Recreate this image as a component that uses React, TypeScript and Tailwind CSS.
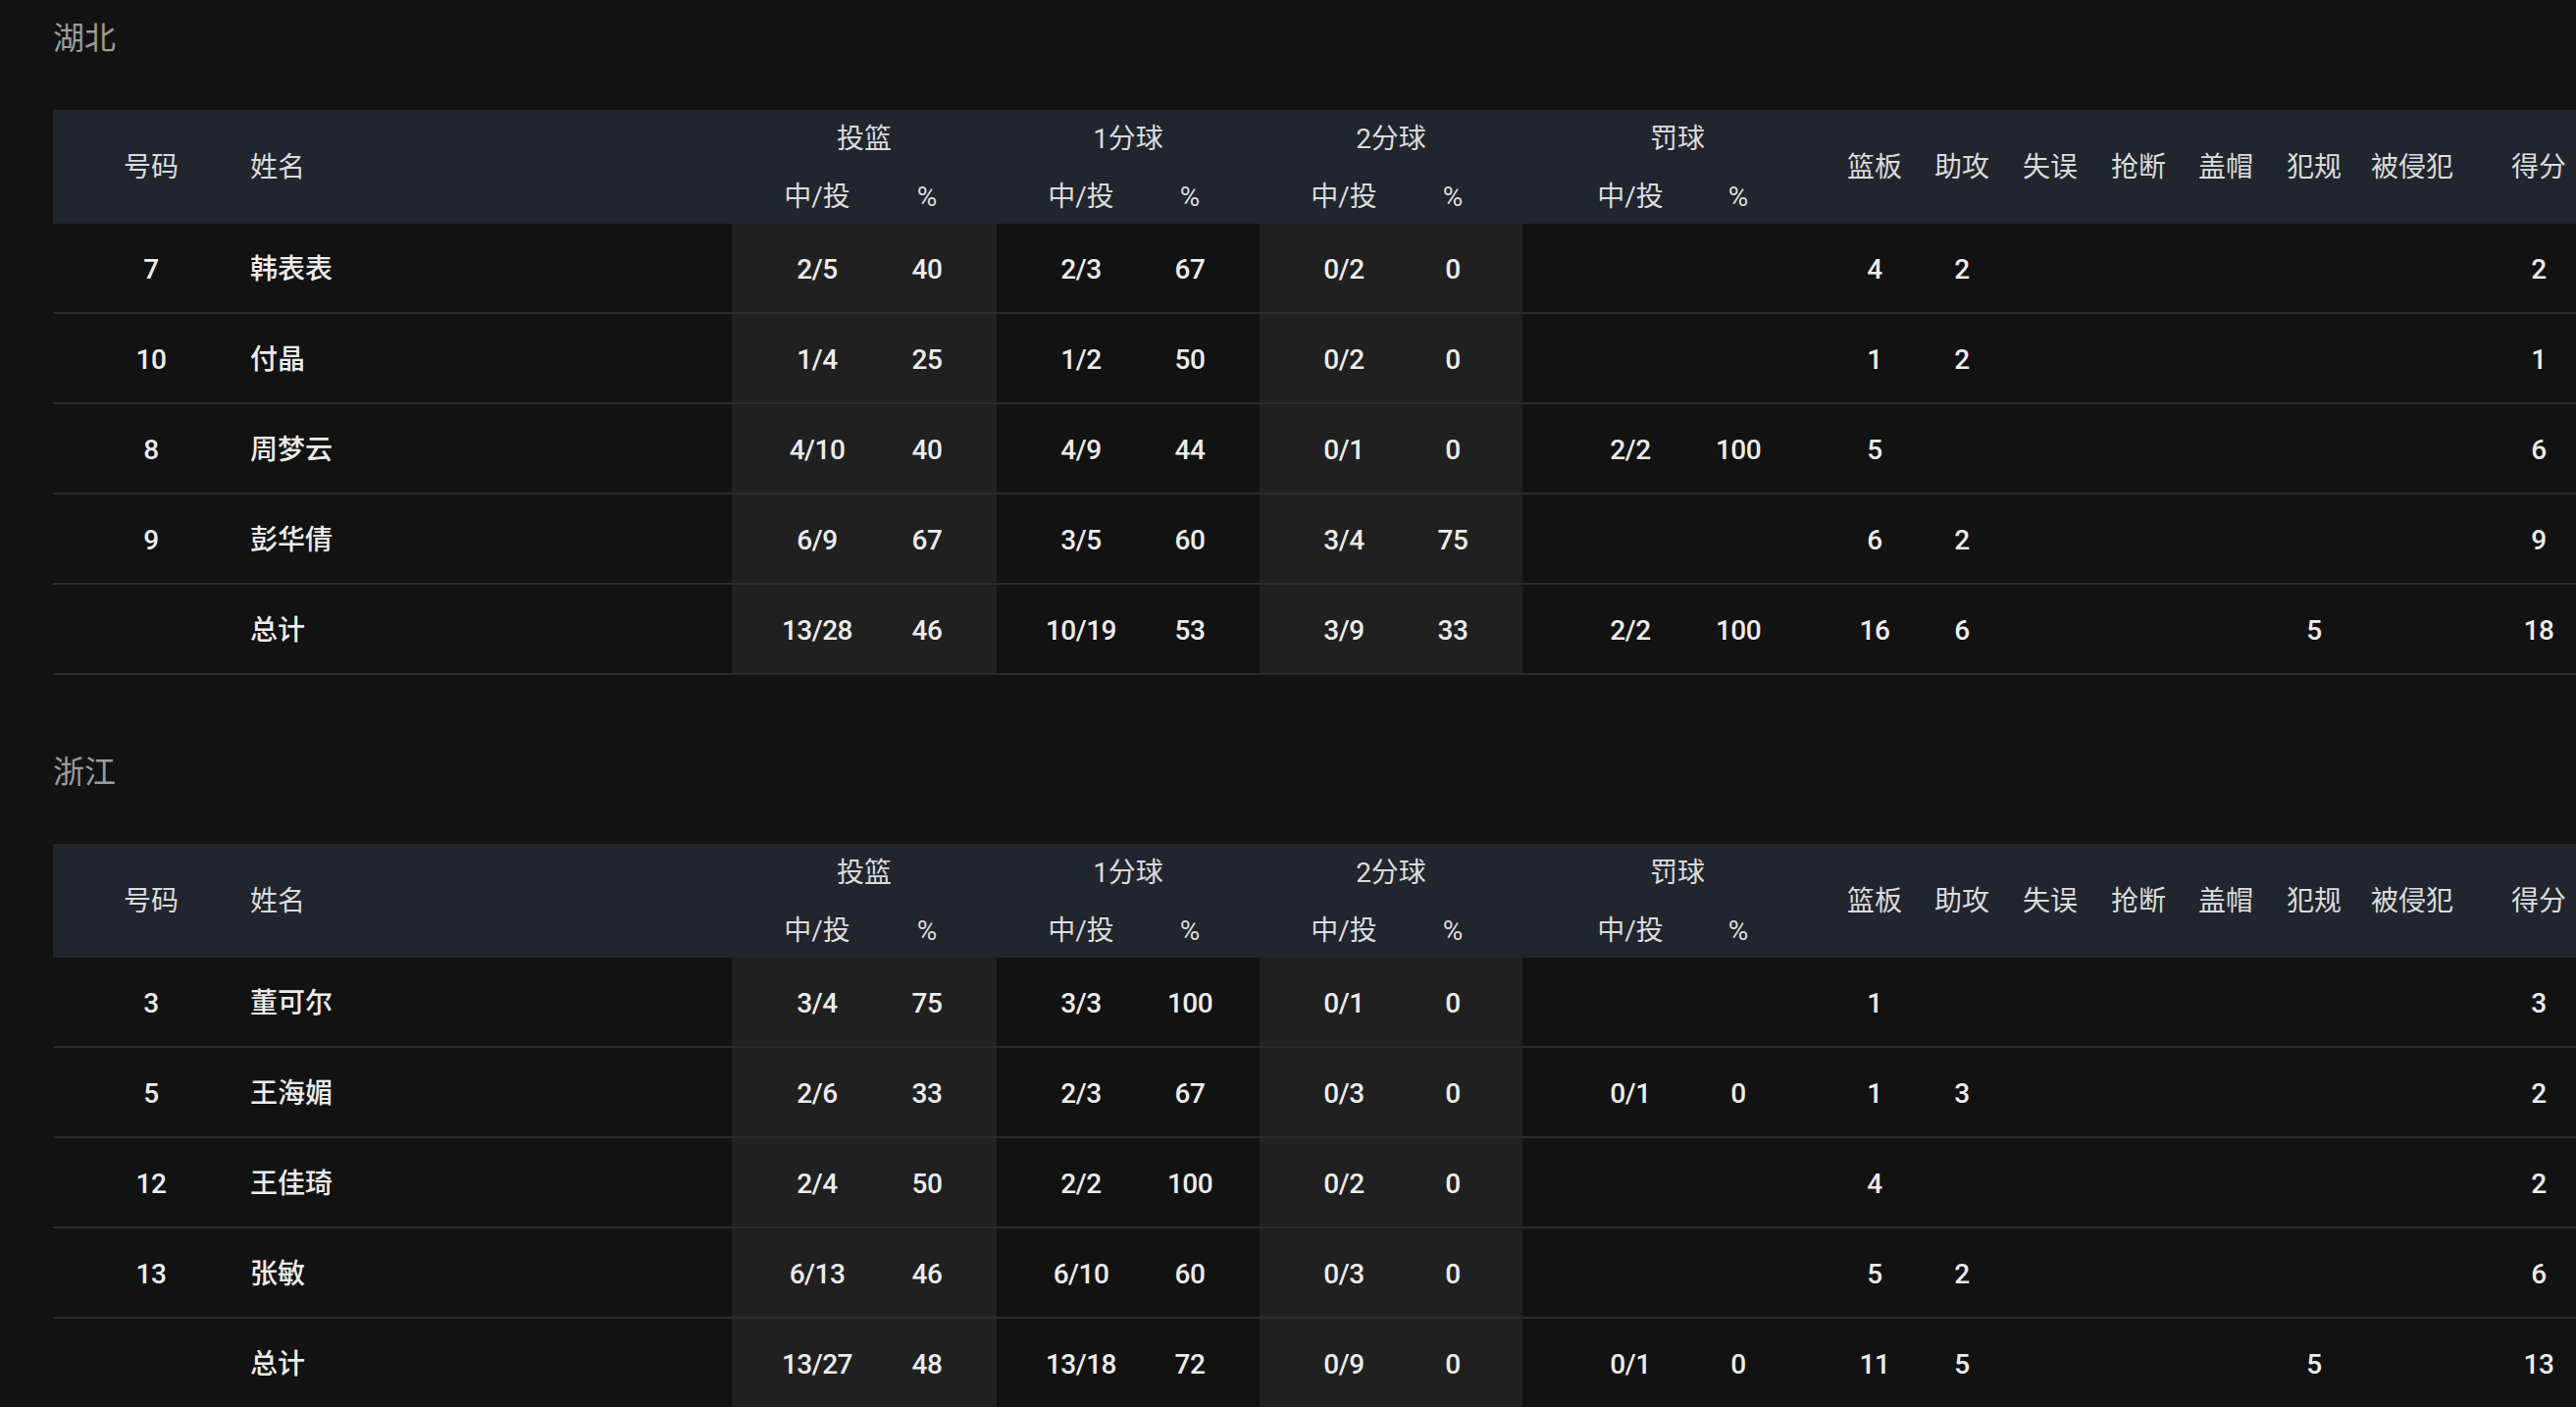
import React from "react";

type Row = {
  no: string;
  name: string;
  fg: [string, string];
  p1: [string, string];
  p2: [string, string];
  ft: [string, string];
  s: string[]; // 篮板 助攻 失误 抢断 盖帽 犯规 被侵犯 得分
};

const hubei: Row[] = [
  { no: "7", name: "韩表表", fg: ["2/5", "40"], p1: ["2/3", "67"], p2: ["0/2", "0"], ft: ["", ""], s: ["4", "2", "", "", "", "", "", "2"] },
  { no: "10", name: "付晶", fg: ["1/4", "25"], p1: ["1/2", "50"], p2: ["0/2", "0"], ft: ["", ""], s: ["1", "2", "", "", "", "", "", "1"] },
  { no: "8", name: "周梦云", fg: ["4/10", "40"], p1: ["4/9", "44"], p2: ["0/1", "0"], ft: ["2/2", "100"], s: ["5", "", "", "", "", "", "", "6"] },
  { no: "9", name: "彭华倩", fg: ["6/9", "67"], p1: ["3/5", "60"], p2: ["3/4", "75"], ft: ["", ""], s: ["6", "2", "", "", "", "", "", "9"] },
  { no: "", name: "总计", fg: ["13/28", "46"], p1: ["10/19", "53"], p2: ["3/9", "33"], ft: ["2/2", "100"], s: ["16", "6", "", "", "", "5", "", "18"] },
];

const zhejiang: Row[] = [
  { no: "3", name: "董可尔", fg: ["3/4", "75"], p1: ["3/3", "100"], p2: ["0/1", "0"], ft: ["", ""], s: ["1", "", "", "", "", "", "", "3"] },
  { no: "5", name: "王海媚", fg: ["2/6", "33"], p1: ["2/3", "67"], p2: ["0/3", "0"], ft: ["0/1", "0"], s: ["1", "3", "", "", "", "", "", "2"] },
  { no: "12", name: "王佳琦", fg: ["2/4", "50"], p1: ["2/2", "100"], p2: ["0/2", "0"], ft: ["", ""], s: ["4", "", "", "", "", "", "", "2"] },
  { no: "13", name: "张敏", fg: ["6/13", "46"], p1: ["6/10", "60"], p2: ["0/3", "0"], ft: ["", ""], s: ["5", "2", "", "", "", "", "", "6"] },
  { no: "", name: "总计", fg: ["13/27", "48"], p1: ["13/18", "72"], p2: ["0/9", "0"], ft: ["0/1", "0"], s: ["11", "5", "", "", "", "5", "", "13"] },
];

const singleWidths = ["w-[86px]", "w-[92px]", "w-[88px]", "w-[92px]", "w-[86px]", "w-[94px]", "w-[106px]", "w-[152px]"];
const singleLabels = ["篮板", "助攻", "失误", "抢断", "盖帽", "犯规", "被侵犯", "得分"];

type GroupStyle = { w: string; ml1: string; ml2: string; shaded: boolean };
const groups: GroupStyle[] = [
  { w: "w-[270px]", ml1: "ml-[37px]", ml2: "ml-[12px]", shaded: true },
  { w: "w-[268px]", ml1: "ml-[36px]", ml2: "ml-[11px]", shaded: false },
  { w: "w-[268px]", ml1: "ml-[36px]", ml2: "ml-[11px]", shaded: true },
  { w: "w-[316px]", ml1: "ml-[60px]", ml2: "ml-[10px]", shaded: false },
];
const groupLabels = ["投篮", "1分球", "2分球", "罚球"];

function PairCells({ g, a, b }: { g: GroupStyle; a: string; b: string }) {
  return (
    <div className="flex items-center h-full pt-[3px]">
      <div className={`w-[100px] text-center ${g.ml1}`}>{a}</div>
      <div className={`w-[100px] text-center ${g.ml2}`}>{b}</div>
    </div>
  );
}

function Header() {
  return (
    <div className="flex h-[116px] bg-[#21252d] text-[28px] text-[#dadbdd] font-normal">
      <div className="w-[200px] shrink-0 flex items-center justify-center pt-[2px]">号码</div>
      <div className="w-[492px] shrink-0 flex items-center pl-[1px] pt-[2px]">姓名</div>
      {groups.map((g, i) => (
        <div key={i} className={`${g.w} shrink-0 flex flex-col`}>
          <div className="h-[58px] flex items-center justify-center pt-[2px]">{groupLabels[i]}</div>
          <div className="h-[58px]">
            <PairCells g={g} a="中/投" b="%" />
          </div>
        </div>
      ))}
      {singleLabels.map((l, i) => (
        <div key={i} className={`${singleWidths[i]} shrink-0 flex items-center justify-center pt-[2px]`}>
          {l}
        </div>
      ))}
    </div>
  );
}

function DataRow({ r }: { r: Row }) {
  const pairs: [string, string][] = [r.fg, r.p1, r.p2, r.ft];
  return (
    <div className="flex h-[92px] border-b-2 border-[#2b2b2b] text-[28px] text-[#ececec] font-medium tracking-[-0.5px]">
      <div className="w-[200px] shrink-0 flex items-center justify-center pt-[3px]">{r.no}</div>
      <div className="w-[492px] shrink-0 flex items-center pl-[1px] pt-[3px] tracking-normal">{r.name}</div>
      {groups.map((g, i) => (
        <div key={i} className={`${g.w} shrink-0 ${g.shaded ? "bg-[#202020]" : ""}`}>
          <PairCells g={g} a={pairs[i][0]} b={pairs[i][1]} />
        </div>
      ))}
      {r.s.map((v, i) => (
        <div key={i} className={`${singleWidths[i]} shrink-0 flex items-center justify-center pt-[3px]`}>
          {v}
        </div>
      ))}
    </div>
  );
}

function Section({ title, rows, first }: { title: string; rows: Row[]; first?: boolean }) {
  return (
    <section className={first ? "" : "mt-[77px]"}>
      <h2 className="h-[44px] leading-[44px] text-[32px] text-[#9c9c9c] font-normal">{title}</h2>
      <div className="mt-[51px] w-[2610px]">
        <Header />
        {rows.map((r, i) => (
          <DataRow key={i} r={r} />
        ))}
      </div>
    </section>
  );
}

export default function App() {
  return (
    <div
      className="w-full min-h-screen bg-[#121212] overflow-hidden pl-[54px] pt-[17px]"
      style={{ fontFamily: 'Roboto, "Noto Sans CJK SC", sans-serif' }}
    >
      <Section title="湖北" rows={hubei} first />
      <Section title="浙江" rows={zhejiang} />
    </div>
  );
}
